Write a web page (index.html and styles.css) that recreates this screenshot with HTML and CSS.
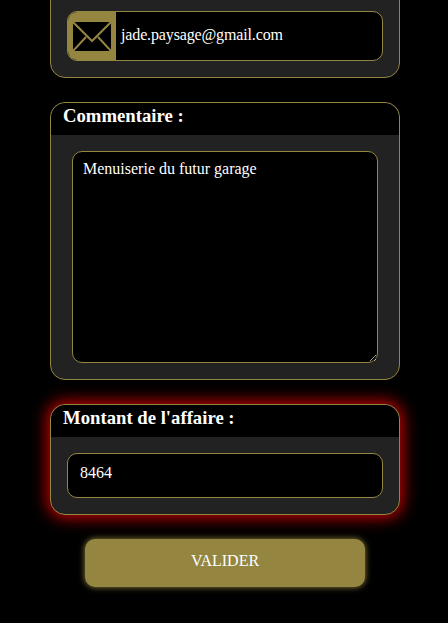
FILE: index.html
```html
<!DOCTYPE html>
<html lang="fr">
<head>
  <meta charset="UTF-8">
  <title>Affaire</title>
  <link rel="stylesheet" href="styles.css">
</head>
<body>
  <form class="page">
    <section class="card card-top">
      <div class="card-body">
        <div class="field field-mail">
          <span class="field-icon">
            <svg width="38" height="29" viewBox="0 0 38 29">
              <rect width="38" height="29" fill="#000"/>
              <path d="M0 0L19 19L38 0M0 29L13 15M38 29L25 15" fill="none" stroke="#948640" stroke-width="2"/>
            </svg>
          </span>
          <span class="field-text">jade.paysage@gmail.com</span>
        </div>
      </div>
    </section>

    <section class="card">
      <h3 class="card-title">Commentaire :</h3>
      <div class="card-body card-body-wide">
        <textarea class="comment">Menuiserie du futur garage</textarea>
      </div>
    </section>

    <section class="card card-alert">
      <h3 class="card-title">Montant de l'affaire :</h3>
      <div class="card-body">
        <div class="field">
          <input class="field-input" type="text" value="8464">
        </div>
      </div>
    </section>

    <button class="btn" type="button">VALIDER</button>
  </form>
</body>
</html>
```

FILE: styles.css
```css
html, body {
  margin: 0;
  padding: 0;
  height: 623px;
  overflow: hidden;
  background-color: #000;
  font-family: "Liberation Serif", serif;
  color: #fff;
}
.page {
  display: flex;
  flex-direction: column;
  align-items: center;
  gap: 24px;
  width: 450px;
}
.card {
  width: 350px;
  box-sizing: border-box;
  border: 1px solid #948640;
  border-radius: 15px;
  background-color: #222;
  overflow: hidden;
}
.card-top {
  margin-top: -30px;
  padding-top: 24px;
}
.card-alert {
  overflow: visible;
  box-shadow: 0 0 15px 3px #c00000;
}
.card-title {
  margin: 0;
  height: 32px;
  padding-left: 12px;
  background-color: #000;
  border-radius: 15px 15px 0 0;
  font-size: 18.72px;
  line-height: 26px;
  font-weight: bold;
}
.card-body {
  padding: 16px;
}
.card-body-wide {
  padding: 16px 21px;
}
.field {
  display: flex;
  height: 45px;
  box-sizing: border-box;
  border: 1px solid #948640;
  border-radius: 10px;
  background-color: #000;
  overflow: hidden;
}
.field-mail {
  height: 50px;
}
.field-icon {
  display: flex;
  align-items: center;
  justify-content: center;
  width: 48px;
  flex-shrink: 0;
  background-color: #948640;
}
.field-text {
  padding: 0 5px;
  font-size: 16px;
  line-height: 45px;
  letter-spacing: -0.14px;
}
.field-input {
  flex: 1;
  min-width: 0;
  height: 38px;
  padding: 0 12px;
  border: none;
  outline: none;
  background: transparent;
  color: #fff;
  font-family: inherit;
  font-size: 16px;
}
.comment {
  display: block;
  width: 100%;
  height: 212px;
  box-sizing: border-box;
  padding: 8px 10px;
  border: 1px solid #948640;
  border-radius: 10px;
  outline: none;
  background-color: #000;
  color: #fff;
  font-family: inherit;
  font-size: 16px;
}
.btn {
  width: 280px;
  height: 48px;
  padding: 0 0 4px;
  border: none;
  border-radius: 10px;
  background-color: #948640;
  box-shadow: 0 0 6px #948640;
  color: #fff;
  font-family: inherit;
  font-size: 16px;
}
```
